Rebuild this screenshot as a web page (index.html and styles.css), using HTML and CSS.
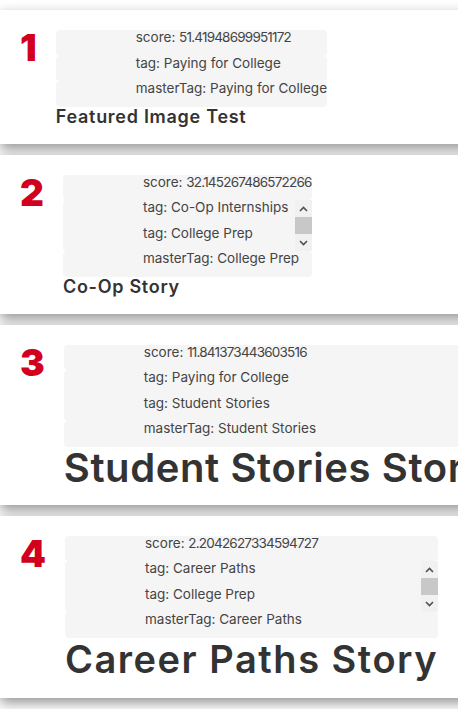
FILE: index.html
```html
<!DOCTYPE html>
<html lang="en">
<head>
<meta charset="utf-8">
<title>Stories ranking</title>
<link rel="stylesheet" href="styles.css">
</head>
<body>
<div class="list">

  <div class="card">
    <div class="rank">1</div>
    <div class="body">
      <div class="meta">
        <div class="sec"><div class="row">score: <span class="num">51.41948699951172</span></div></div>
        <div class="sec tags"><div class="tag-list"><div class="row">tag: Paying for College</div></div></div>
        <div class="sec"><div class="row">masterTag: Paying for College</div></div>
      </div>
      <div class="title title-s">Featured Image Test</div>
    </div>
  </div>

  <div class="card">
    <div class="rank">2</div>
    <div class="body">
      <div class="meta">
        <div class="sec"><div class="row">score: <span class="num">32.145267486572266</span></div></div>
        <div class="sec tags">
          <div class="tag-list">
            <div class="row">tag: Co-Op Internships</div>
            <div class="row">tag: College Prep</div>
          </div>
          <div class="scrollbar">
            <div class="sb-btn"><svg width="9" height="6" viewBox="0 0 9 6"><path d="M1 5 L4.5 1.5 L8 5" fill="none" stroke="#505050" stroke-width="1.6"/></svg></div>
            <div class="sb-thumb"></div>
            <div class="sb-btn"><svg width="9" height="6" viewBox="0 0 9 6"><path d="M1 1 L4.5 4.5 L8 1" fill="none" stroke="#505050" stroke-width="1.6"/></svg></div>
          </div>
        </div>
        <div class="sec"><div class="row">masterTag: College Prep</div></div>
      </div>
      <div class="title title-s">Co-Op Story</div>
    </div>
  </div>

  <div class="card">
    <div class="rank">3</div>
    <div class="body">
      <div class="meta">
        <div class="sec"><div class="row">score: <span class="num">11.841373443603516</span></div></div>
        <div class="sec tags">
          <div class="tag-list">
            <div class="row">tag: Paying for College</div>
            <div class="row">tag: Student Stories</div>
          </div>
        </div>
        <div class="sec"><div class="row">masterTag: Student Stories</div></div>
      </div>
      <div class="title title-xl">Student Stories Story</div>
    </div>
  </div>

  <div class="card">
    <div class="rank">4</div>
    <div class="body">
      <div class="meta">
        <div class="sec"><div class="row">score: <span class="num">2.2042627334594727</span></div></div>
        <div class="sec tags">
          <div class="tag-list">
            <div class="row">tag: Career Paths</div>
            <div class="row">tag: College Prep</div>
          </div>
          <div class="scrollbar">
            <div class="sb-btn"><svg width="9" height="6" viewBox="0 0 9 6"><path d="M1 5 L4.5 1.5 L8 5" fill="none" stroke="#505050" stroke-width="1.6"/></svg></div>
            <div class="sb-thumb"></div>
            <div class="sb-btn"><svg width="9" height="6" viewBox="0 0 9 6"><path d="M1 1 L4.5 4.5 L8 1" fill="none" stroke="#505050" stroke-width="1.6"/></svg></div>
          </div>
        </div>
        <div class="sec"><div class="row">masterTag: Career Paths</div></div>
      </div>
      <div class="title title-l">Career Paths Story</div>
    </div>
  </div>

</div>
</body>
</html>
```
FILE: styles.css
```css
html, body {
  margin: 0;
  padding: 0;
  background: #ffffff;
  overflow: hidden;
}
body {
  font-family: Inter, "Liberation Sans", sans-serif;
  color: #333;
}
.list {
  padding-top: 10px;
  width: calc(100% + 40px);
}
.card {
  display: flex;
  align-items: flex-start;
  background: #fff;
  padding: 20px 0 17px 20px;
  margin-bottom: 11px;
  box-shadow: 0 5px 12px rgba(0, 0, 0, 0.42);
  position: relative;
}
.rank {
  flex: none;
  font-family: Inter, sans-serif;
  font-weight: 900;
  font-size: 37px;
  line-height: 30px;
  height: 30px;
  color: #d2001e;
  margin-right: 20px;
  padding-top: 3px;
  letter-spacing: -1px;
}
.body {
  flex: none;
  display: flex;
  flex-direction: column;
}
.meta {
  display: flex;
  flex-direction: column;
}
.sec {
  background: #f5f5f5;
  border-radius: 4px;
}
.tags {
  display: flex;
}
.tag-list {
  flex: 1;
}
.row {
  height: 25.5px;
  padding-left: 80px;
  font-size: 13.5px;
  line-height: 14px;
  color: #444;
  white-space: nowrap;
}
.num {
  letter-spacing: -0.8px;
}
.scrollbar {
  flex: none;
  width: 17px;
  display: flex;
  flex-direction: column;
  background: #f1f1f1;
}
.sb-btn {
  height: 17px;
  display: flex;
  align-items: center;
  justify-content: center;
}
.sb-thumb {
  height: 17px;
  background: #c8c8c8;
}
.title {
  font-weight: 600;
  color: #333;
  white-space: nowrap;
  letter-spacing: 0.04em;
}
.title-s {
  font-size: 18px;
  line-height: 20px;
}
.title-l {
  font-size: 38px;
  line-height: 43px;
}
.title-xl {
  font-size: 40px;
  line-height: 41px;
  letter-spacing: 0.015em;
}
```
